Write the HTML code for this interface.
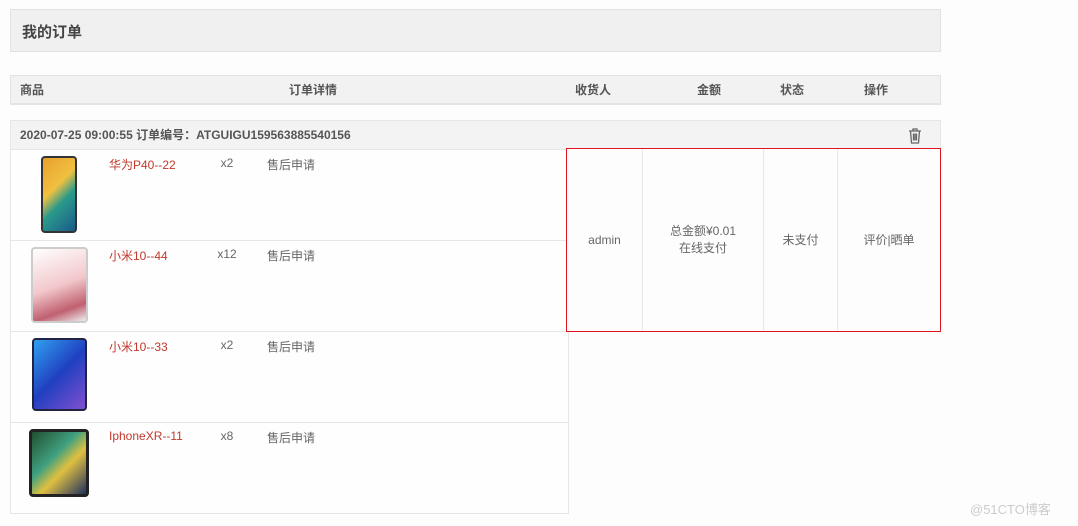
<!DOCTYPE html>
<html><head><meta charset="utf-8"><style>
*{margin:0;padding:0;box-sizing:border-box}
body{width:1078px;height:526px;background:#fdfdfd;font-family:"Liberation Sans","Noto Sans CJK SC",sans-serif;color:#555;position:relative;overflow:hidden;font-size:12px}
.a{position:absolute}
.hd{left:10px;top:9px;width:931px;height:43px;background:#f0f0f0;border:1px solid #e2e2e2}
.hd span{position:absolute;left:11px;top:11px;font-size:15px;font-weight:bold;color:#444}
.th{left:10px;top:75px;width:931px;height:30px;background:#f2f2f2;border:1px solid #e2e2e2;border-bottom:2px solid #e4e4e4}
.th span{position:absolute;top:5px;font-weight:bold;color:#555}
.oh{left:10px;top:120px;width:931px;height:30px;background:#f3f3f3;border:1px solid #e6e6e6}
.oh span{position:absolute;left:9px;top:5px;font-weight:bold;color:#555;font-size:12px}
.row{left:10px;width:559px;height:91px;border:1px solid #e6e6e6;border-top:none;background:#fefefe}
.row .n{position:absolute;left:98px;top:6px;color:#c0392b;font-size:12px}
.row .q{position:absolute;left:205px;top:6px;color:#666;width:22px;text-align:center}
.row .s{position:absolute;left:256px;top:6px;color:#666}
.ph{position:absolute;top:6px;border-radius:4px;border:2px solid #333}
.red{left:566px;top:148px;width:375px;height:184px;border:1.5px solid #e0141e;background:#fdfdfd}
.red div{position:absolute;top:0;height:100%;border-right:1px solid #e8e8e8;display:flex;align-items:center;justify-content:center;text-align:center;color:#666;line-height:17px}
</style></head><body>
<div class="a hd"><span>我的订单</span></div>
<div class="a th"><span style="left:9px">商品</span><span style="left:278px">订单详情</span><span style="left:564px">收货人</span><span style="left:686px">金额</span><span style="left:769px">状态</span><span style="left:853px">操作</span></div>
<div class="a oh"><span>2020-07-25 09:00:55 订单编号：ATGUIGU159563885540156</span>
<svg style="position:absolute;left:897px;top:7px" width="14" height="16" viewBox="0 0 14 16"><path d="M1 3h12M5 3V1h4v2M2.5 3l1 12h7l1-12M5.5 5.5v7M7 5.5v7M8.5 5.5v7" fill="none" stroke="#666" stroke-width="1.3"/></svg></div>
<div class="a row" style="top:150px"><div class="ph" style="left:30px;width:36px;height:77px;background:linear-gradient(135deg,#e8a030,#f0c040 40%,#2a9a8a 60%,#1a5a8a)"></div><span class="n">华为P40--22</span><span class="q">x2</span><span class="s">售后申请</span></div>
<div class="a row" style="top:241px"><div class="ph" style="left:20px;width:57px;height:76px;border:2px solid #ccc;background:linear-gradient(160deg,#fff,#f2c8cc 50%,#c06070 80%,#eee)"></div><span class="n">小米10--44</span><span class="q">x12</span><span class="s">售后申请</span></div>
<div class="a row" style="top:332px"><div class="ph" style="left:21px;width:55px;height:73px;border:2px solid #224;background:linear-gradient(135deg,#30a0f0,#2040c0 50%,#8050d0)"></div><span class="n">小米10--33</span><span class="q">x2</span><span class="s">售后申请</span></div>
<div class="a row" style="top:423px"><div class="ph" style="left:18px;width:60px;height:68px;border:3px solid #222;background:linear-gradient(135deg,#205030,#40a080 40%,#e0c040 60%,#203060)"></div><span class="n">IphoneXR--11</span><span class="q">x8</span><span class="s">售后申请</span></div>
<div class="a red">
<div style="left:0;width:76px">admin</div>
<div style="left:76px;width:121px">总金额¥0.01<br>在线支付</div>
<div style="left:197px;width:74px">未支付</div>
<div style="left:271px;width:102px;border:none">评价|晒单</div>
</div>
<div class="a" style="left:970px;top:499px;color:#ccc;font-size:13px">@51CTO博客</div>
</body></html>
